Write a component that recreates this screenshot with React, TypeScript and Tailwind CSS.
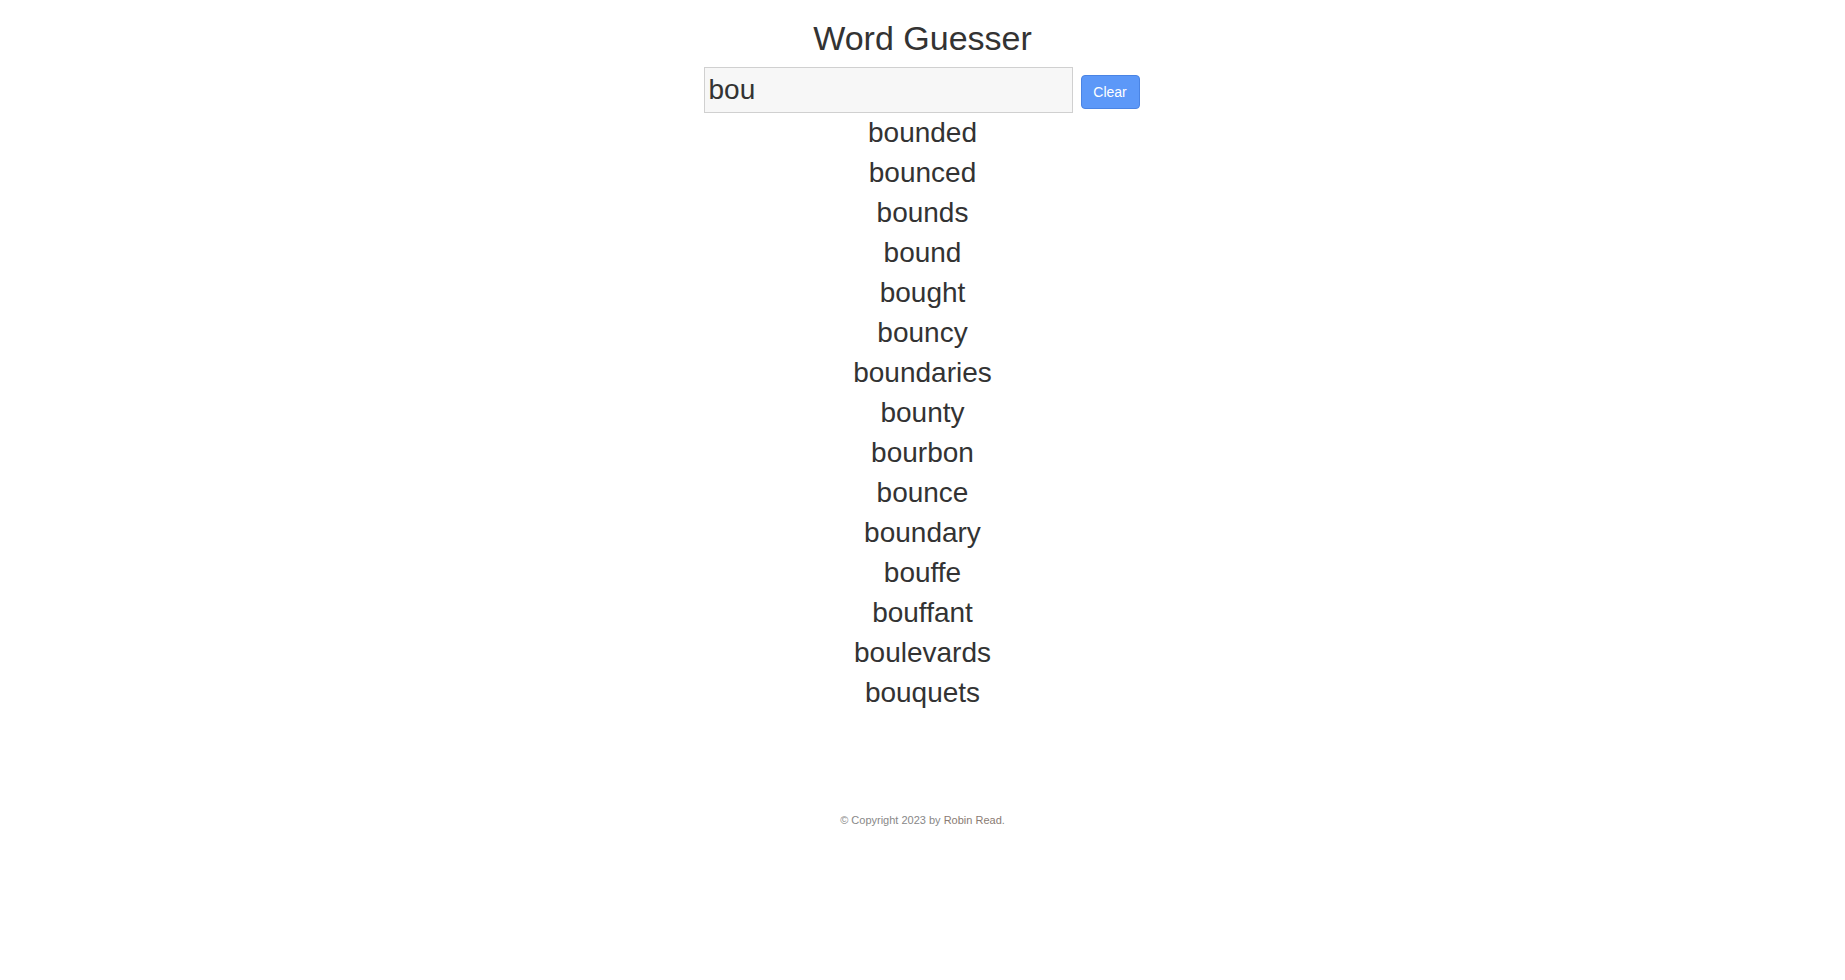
import React, { useState } from "react";

const WORDS = [
  "bounded",
  "bounced",
  "bounds",
  "bound",
  "bought",
  "bouncy",
  "boundaries",
  "bounty",
  "bourbon",
  "bounce",
  "boundary",
  "bouffe",
  "bouffant",
  "boulevards",
  "bouquets",
];

function App() {
  const [guess, setGuess] = useState("bou");

  return (
    <div className="min-h-screen bg-white text-[#333] font-['Liberation_Sans',Arial,sans-serif]">
      <div className="flex flex-col items-center pt-[18px]">
        <h1 className="text-[34px] leading-[40px] font-normal">Word Guesser</h1>

        <div className="mt-[9px] mr-[2px] flex items-center gap-[8px]">
          <input
            value={guess}
            onChange={(e) => setGuess(e.target.value)}
            className="w-[369px] h-[46px] border border-[#d0d0d0] bg-[#f7f7f7] px-[4px] text-[28px] text-[#333] outline-none"
          />
          <button
            onClick={() => setGuess("")}
            className="mt-[3px] w-[59px] h-[34px] rounded-[4px] border border-[#4a84e4] bg-[#5c98f8] pt-[1px] text-[14px] text-white"
          >
            Clear
          </button>
        </div>

        {/* suggestions */}
        <ul className="flex flex-col items-center">
          {WORDS.map((w) => (
            <li key={w} className="text-[28px] leading-[40px]">
              {w}
            </li>
          ))}
        </ul>

        <footer className="mt-[99px] text-[11px] leading-[16px] text-[#888]">
          © Copyright 2023 by <a className="text-[#8a7b72]">Robin Read</a>.
        </footer>
      </div>
    </div>
  );
}

export default App;
